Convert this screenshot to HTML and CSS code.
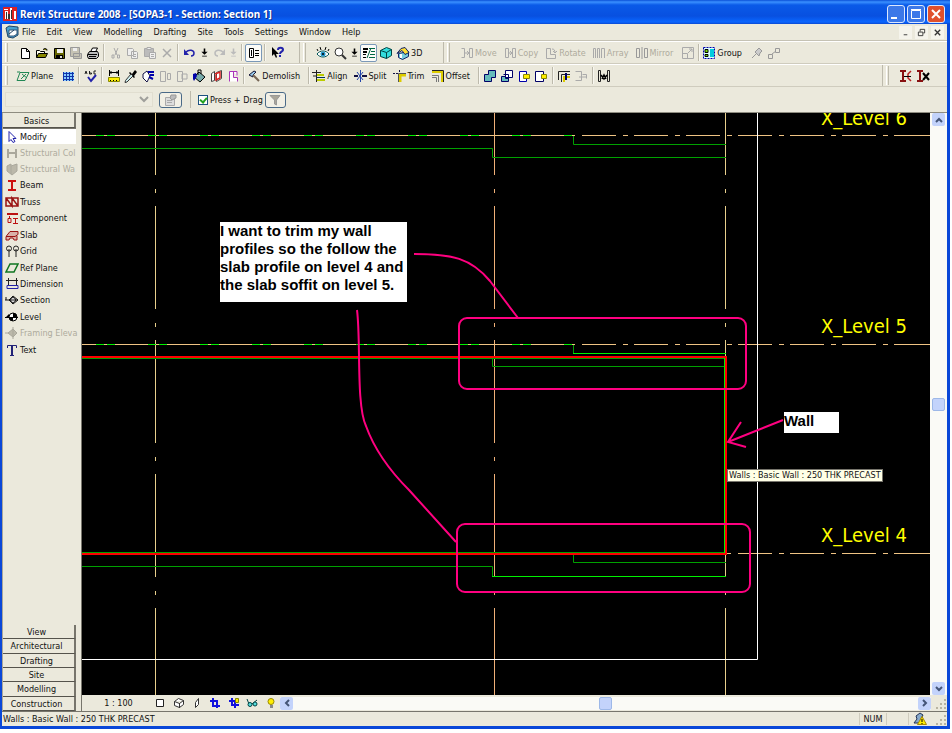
FILE: index.html
```html
<!DOCTYPE html>
<html lang="en">
  <head>
    <meta charset="utf-8" />
    <title>Revit Structure 2008 - [SOPA3-1 - Section: Section 1]</title>
    <link rel="stylesheet" href="styles.css">
  </head>

  <body>
    <div class="window">
      <header class="titlebar">
        <svg class="app-icon" viewBox="0 0 14 14"><path fill="#d22" d="M0 0h14v14H0z"/><path fill="#fff" d="M1 2h4v1H1zM2 4h3v8H2zM7 1h2v12H7zM11 4h2v8h-2z"/><path fill="#333" d="M3 5h1v7H3zM8 3h1v9H8zM5 7h2v5H5z"/></svg>
        <h1>Revit Structure 2008 - [SOPA3-1 - Section: Section 1]</h1>
        <div class="window-buttons">
          <button type="button" aria-label="Minimize"><svg viewBox="0 0 16 16"><path fill="#fff" d="M3 11h6v2H3z"/></svg></button>
          <button type="button" aria-label="Maximize"><svg viewBox="0 0 16 16"><path fill="none" stroke="#fff" d="M3.500 4.500h9v8h-9zM3 3.500h10"/></svg></button>
          <button type="button" class="close" aria-label="Close"><svg viewBox="0 0 16 16"><path stroke="#fff" stroke-width="2" d="M4 4l8 8M12 4l-8 8"/></svg></button>
        </div>
      </header>

      <nav class="menubar">
        <svg class="icon" viewBox="0 0 14 14"><path fill="#4aa3d0" stroke="#246" d="M1 3l3-2 9 1v8l-5 3-5-1z"/><path fill="#fff" stroke="#357" d="M4 5h8v4l-3 2H4z"/><path stroke="#246" d="M4 9l5-4"/></svg>
        <a href="#">File</a>
        <a href="#">Edit</a>
        <a href="#">View</a>
        <a href="#">Modelling</a>
        <a href="#">Drafting</a>
        <a href="#">Site</a>
        <a href="#">Tools</a>
        <a href="#">Settings</a>
        <a href="#">Window</a>
        <a href="#">Help</a>
        <div class="doc-buttons">
          <button type="button" aria-label="Minimize view"><svg viewBox="0 0 10 10"><path stroke="#333" d="M3 7.500h4"/></svg></button>
          <button type="button" aria-label="Restore view"><svg viewBox="0 0 10 10"><path fill="none" stroke="#333" d="M3.500 4V1.500h5v4H7M1.500 4.500h5v4h-5z"/></svg></button>
          <button type="button" aria-label="Close view"><svg viewBox="0 0 10 10"><path stroke="#333" stroke-width="1.500" d="M2 2l6 6M8 2l-6 6"/></svg></button>
        </div>
      </nav>

      <div class="toolbar-row standard-row">
        <div class="toolbar">
          <span class="grip"></span>
          <button type="button" class="tool" aria-label="New"><svg class="icon" viewBox="0 0 14 14"><path fill="#fff" stroke="#000" d="M3.500 2.500h5l3 3v7h-8zM8.500 2.500v3h3"/></svg></button>
          <button type="button" class="tool" aria-label="Open"><svg class="icon" viewBox="0 0 14 14"><path fill="#ffe" stroke="#000" d="M1.500 11.500v-7h3l1 1h4v2"/><path fill="#880" stroke="#000" d="M1.500 11.500l2-4h9l-2 4zM8 3.500l2-1 2 1v1"/></svg></button>
          <button type="button" class="tool" aria-label="Save"><svg class="icon" viewBox="0 0 14 14"><path fill="#660" stroke="#000" d="M2.500 2.500h10v10h-10z"/><path fill="#eee" d="M5 3h6v4H5z"/><path d="M4 9h7v4H4z"/><path fill="#ddd" d="M8 10h2v2H8z"/></svg></button>
          <button type="button" class="tool" disabled aria-label="Save to central"><svg class="icon" viewBox="0 0 14 14"><path fill="#c6c3b4" stroke="#999" d="M1.500 1.500h9v9h-9zM4.500 7.500h8v5h-8z"/><path fill="#eee" d="M4 2h4v3H4z"/></svg></button>
          <button type="button" class="tool" aria-label="Print"><svg class="icon" viewBox="0 0 14 14"><path fill="#fff" stroke="#000" d="M4.500 6l2-4h5l-2 4"/><path fill="#bbb" stroke="#000" d="M1.500 8.500l2-3h8l1 2v3l-2 2h-8l-1-2z"/><path stroke="#000" d="M2 8.500h9M3 10.500h7"/></svg></button>
          <span class="sep"></span>
          <button type="button" class="tool" disabled aria-label="Cut"><svg class="icon" viewBox="0 0 14 14"><path fill="none" stroke="#aaa" d="M5 2l3 7M9 2L6 9M3 9h2v3H3zM8.500 9h2v3h-2z"/></svg></button>
          <button type="button" class="tool" disabled aria-label="Copy to clipboard"><svg class="icon" viewBox="0 0 14 14"><path fill="#eee" stroke="#aaa" d="M1.500 2.500h5l1 1v6h-6zM5.500 5.500h5l1 1v6h-6zM7 8.500h3M7 10.500h3"/></svg></button>
          <button type="button" class="tool" disabled aria-label="Paste"><svg class="icon" viewBox="0 0 14 14"><path fill="#bbb" stroke="#aaa" d="M1.500 2.500h9v8h-9z"/><path fill="#eee" stroke="#aaa" d="M6.500 6.500h6v6h-6zM4 1.500h4v2H4zM8 8.500h3M8 10.500h3"/></svg></button>
          <button type="button" class="tool" disabled aria-label="Delete"><svg class="icon" viewBox="0 0 14 14"><path stroke="#aaa" stroke-width="1.500" d="M3 3l8 8M11 3l-8 8"/></svg></button>
          <span class="sep"></span>
          <button type="button" class="tool" aria-label="Undo"><svg class="icon" viewBox="0 0 14 14"><path fill="none" stroke="#22a" stroke-width="1.500" d="M3 6c3-3 8-2 8 1 0 2-1 3-3 3"/><path fill="#22a" d="M1 3v6h5z"/></svg></button>
          <button type="button" class="tool drop" aria-label="Undo list"><svg class="icon" viewBox="0 0 14 14"><path d="M6 2h2v4h3L7 10 3 6h3zM4 11h6v1H4z"/></svg></button>
          <button type="button" class="tool" disabled aria-label="Redo"><svg class="icon" viewBox="0 0 14 14"><path fill="none" stroke="#bbb" stroke-width="1.500" d="M11 6C8 3 3 4 3 7c0 2 1 3 3 3"/><path fill="#bbb" d="M13 3v6H8z"/></svg></button>
          <button type="button" class="tool drop" disabled aria-label="Redo list"><svg class="icon" viewBox="0 0 14 14"><path fill="#bbb" d="M6 2h2v4h3L7 10 3 6h3zM4 11h6v1H4z"/></svg></button>
          <span class="sep"></span>
          <button type="button" class="tool pressed" aria-label="Project browser"><svg class="icon" viewBox="0 0 14 14"><path fill="#fff" stroke="#000" d="M2.500 2.500h4v9h-4zM4.500 4v6"/><path stroke="#000" d="M8 4.500h4M8 7.500h4M8 9.500h4"/></svg></button>
          <span class="sep"></span>
          <button type="button" class="tool" aria-label="Context help"><svg class="icon" viewBox="0 0 14 14"><path d="M2 1v9l2-2 2 4 1-1-1-3h3z"/><path fill="none" stroke="#22a" stroke-width="2" d="M8 4c0-3 5-3 5 0 0 2-3 1-3 4M10 9v2"/></svg></button>
        </div>

        <div class="toolbar raised">
          <span class="grip"></span>
          <button type="button" class="tool" aria-label="Dynamic view"><svg class="icon" viewBox="0 0 14 14"><path fill="#fff" stroke="#055" d="M1 8c3-4 9-4 12 0-3 4-9 4-12 0z"/><circle cx="7" cy="8" r="2.500" fill="#29c"/><circle cx="7" cy="8" r="1"/><path stroke="#000" d="M2 5L1 3M5 4L4 1M9 4l1-3M12 5l1-2"/></svg></button>
          <button type="button" class="tool" aria-label="Zoom"><svg class="icon" viewBox="0 0 14 14"><circle cx="6" cy="6" r="4" fill="#fff" stroke="#333"/><path stroke="#333" stroke-width="2" d="M9 9l4 4"/></svg></button>
          <button type="button" class="tool drop" aria-label="Zoom list"><svg class="icon" viewBox="0 0 14 14"><path d="M6 2h2v4h3L7 10 3 6h3zM4 11h6v1H4z"/></svg></button>
          <button type="button" class="tool pressed" aria-label="Thin lines"><svg class="icon" viewBox="0 0 14 14"><path d="M1 2h5v2H1zM1 5h4v2H1zM1 8h3v1H1zM1 11h3v1H1z"/><path stroke="#064" d="M5 12l4-10M7 2.500h6M9 5.500h4M8 8.500h5M7 11.500h6"/></svg></button>
          <button type="button" class="tool" aria-label="Shaded view"><svg class="icon" viewBox="0 0 14 14"><path fill="#3dd" stroke="#044" d="M1.500 4.500l6-3 5 2v6l-5 3-6-2z"/><path fill="none" stroke="#044" d="M1.500 4.500l6 2 5-3M7.500 6.500v6"/></svg></button>
          <button type="button" class="tool" aria-label="Default 3D view"><svg class="icon" viewBox="0 0 14 14"><path fill="#7cd" stroke="#126" d="M2.500 7.500v4l4 2 6-3v-5z"/><path fill="#fd3" stroke="#126" d="M1 7.500l4-5 4-1 4 5-4 2-3-4z"/><path fill="#fff" d="M4 8h2v4H4z"/></svg></button>
          <button type="button" class="text-tool">3D</button>
        </div>

        <div class="toolbar raised edit-tools">
          <span class="grip"></span>
          <button type="button" class="text-tool" disabled><svg class="icon" viewBox="0 0 14 14"><path fill="none" stroke="#aaa" d="M1.500 2.500h3v9h-3M9.500 2.500h3v9h-3zM5 7h4M7 5l2 2-2 2"/></svg>Move</button>
          <button type="button" class="text-tool" disabled><svg class="icon" viewBox="0 0 14 14"><path fill="none" stroke="#aaa" d="M2.500 2.500h3v9h-3zM9.500 2.500h3v9h-3zM5 7h4M7 5l2 2-2 2"/></svg>Copy</button>
          <button type="button" class="text-tool" disabled><svg class="icon" viewBox="0 0 14 14"><path fill="none" stroke="#aaa" d="M2.500 12.500v-10h4v6h5v4zM8 3c2 0 3 1 3 4M9 5l2 2 2-2"/></svg>Rotate</button>
          <button type="button" class="text-tool" disabled><svg class="icon" viewBox="0 0 14 14"><path fill="none" stroke="#aaa" d="M1.500 12V2.500h2V12M5.500 12V2.500h2V12M9.500 12V2.500h3V12"/></svg>Array</button>
          <button type="button" class="text-tool" disabled><svg class="icon" viewBox="0 0 14 14"><path fill="none" stroke="#999" d="M1.500 2.500h3v9h-3zM9.500 2.500h3v9h-3zM7 1v12"/></svg>Mirror</button>
          <button type="button" class="tool" disabled aria-label="Resize"><svg class="icon" viewBox="0 0 14 14"><path fill="none" stroke="#aaa" d="M1.500 1.500h11v11h-11zM1.500 7.500h5v5M7 7l4-4M8 3h3v3"/></svg></button>
          <span class="sep"></span>
          <button type="button" class="text-tool"><svg class="icon" viewBox="0 0 14 14"><path fill="#dff" stroke="#00a" stroke-dasharray="2 1" d="M1.500 1.500h11v11h-11z"/><path fill="#7d0" stroke="#000" d="M3 3.500h3v3H3zM3 8.500h3v2H3z"/><path fill="#0cd" d="M8 3h4v8H8z"/></svg>Group</button>
          <button type="button" class="tool" disabled aria-label="Pin"><svg class="icon" viewBox="0 0 14 14"><path fill="#ccc" stroke="#999" d="M2 12l4-4M5 6l4 4 1-3 2-2-3-3-2 2z"/></svg></button>
          <button type="button" class="tool" disabled aria-label="Unpin"><svg class="icon" viewBox="0 0 14 14"><path fill="none" stroke="#999" d="M1.500 8.500h4v4h-4zM8.500 2.500h4v4h-4zM5 8l4-3"/></svg></button>
        </div>
      </div>

      <div class="toolbar-row">
        <div class="toolbar tools">
          <span class="grip"></span>
          <button type="button" class="text-tool"><svg class="icon" viewBox="0 0 14 14"><path fill="none" stroke="#285" d="M4 3.500h9l-4 8H1zM6 5l5 4M10 5l-5 5M1 3h3"/></svg>Plane</button>
          <button type="button" class="tool" aria-label="Work plane visibility"><svg class="icon" viewBox="0 0 14 14"><path fill="#8cf" d="M2 3h11v9H2z"/><path stroke="#13a" d="M2.500 3v9M5.500 3v9M8.500 3v9M11.500 3v9M2 4.500h11M2 7.500h11M2 10.500h11"/></svg></button>
          <span class="sep"></span>
          <button type="button" class="tool" aria-label="Spelling"><svg class="icon" viewBox="0 0 14 14"><path fill="none" stroke="#222" d="M1 5l1-3 1 3M5.500 2v3h2V4h-2M12 2h-2v3h2"/><path fill="none" stroke="#22a" stroke-width="2" d="M4 8l3 4 5-6"/></svg></button>
          <span class="sep"></span>
          <button type="button" class="tool" aria-label="Tape measure"><svg class="icon" viewBox="0 0 14 14"><path fill="none" stroke="#000" d="M2.500 1v6M11.500 1v6M2 3.500h10M4 2v3M10 2v3"/><path fill="#fe0" stroke="#880" d="M1.500 8.500h11v4h-11z"/><path stroke="#000" d="M3.500 11v1M6.500 11v1M9.500 11v1"/></svg></button>
          <button type="button" class="tool" aria-label="Match type"><svg class="icon" viewBox="0 0 14 14"><path d="M8 5l3-4 2 2-3 4zM6 3l5 5-1 1-5-5z"/><path fill="#cee" stroke="#333" d="M7 5l2 2-6 6-2 .500.500-2z"/></svg></button>
          <button type="button" class="tool" aria-label="Linework"><svg class="icon" viewBox="0 0 14 14"><path fill="#fff" stroke="#114" d="M2 5l4-3 3 5-3 6-4-4z"/><path stroke="#00a" stroke-width="2" d="M7 3h6M9 6h4M8 8l4 2"/></svg></button>
          <button type="button" class="tool" disabled aria-label="Show hidden lines"><svg class="icon" viewBox="0 0 14 14"><path fill="none" stroke="#aaa" d="M2.500 2.500h5v10h-5zM9.500 4.500h3v6h-3z"/></svg></button>
          <button type="button" class="tool" disabled aria-label="Remove hidden lines"><svg class="icon" viewBox="0 0 14 14"><path fill="none" stroke="#aaa" d="M2.500 2.500h5v10h-5zM7 5h5v5H7z"/></svg></button>
          <button type="button" class="tool" aria-label="Paint"><svg class="icon" viewBox="0 0 14 14"><path fill="#7aa" stroke="#000" d="M2 8l5-5 6 5-5 5z"/><path fill="#00a" d="M1 5l3-1 1 3-3 5-1-2z"/><path fill="none" stroke="#000" d="M6 6V1h3v4"/></svg></button>
          <button type="button" class="tool" aria-label="Split face"><svg class="icon" viewBox="0 0 14 14"><path fill="#fff" stroke="#444" d="M2.500 4.500l3-2v9l-3 1zM7.500 3.500l5-2v8l-5 3z"/><path fill="none" stroke="#d22" stroke-width="1.500" d="M6 5l5-2v6l-4 2V6"/></svg></button>
          <button type="button" class="tool" aria-label="Demolish phase"><svg class="icon" viewBox="0 0 14 14"><path fill="#fff" stroke="#a3b" d="M3.500 12.500v-10h4v6h4v4M7 2.500h4v4"/></svg></button>
          <span class="sep"></span>
          <button type="button" class="text-tool"><svg class="icon" viewBox="0 0 14 14"><path fill="#9ce" stroke="#113" d="M2 6l5-4 2 1-3 3v2z"/><path stroke="#765" stroke-width="2" d="M6 6l6 6"/></svg>Demolish</button>
          <span class="sep"></span>
          <button type="button" class="text-tool"><svg class="icon" viewBox="0 0 14 14"><path stroke="#222" d="M0 3.500h9M4.500 1v12M1 7h3"/><path stroke="#bc0" stroke-width="2" d="M5 6h7M5 11h8"/><path stroke="#035" d="M5 8.500h8"/></svg>Align</button>
          <button type="button" class="text-tool"><svg class="icon" viewBox="0 0 14 14"><path stroke="#114" stroke-width="2" d="M1 7h4M9 7h5"/><path stroke="#24a" d="M4 3l6 8M10 3l-6 8M7.500 1v12"/></svg>Split</button>
          <button type="button" class="text-tool"><svg class="icon" viewBox="0 0 14 14"><path fill="none" stroke="#114" stroke-dasharray="2 1" d="M1 4.500h5M7.500 1v4"/><path fill="none" stroke="#dc0" stroke-width="3" d="M8 13V6h6"/><path fill="none" stroke="#555" d="M6.500 13V4.500H14"/></svg>Trim</button>
          <button type="button" class="text-tool"><svg class="icon" viewBox="0 0 14 14"><path fill="none" stroke="#222" d="M1 1.500h11.500V13"/><path fill="none" stroke="#dc0" stroke-width="2" d="M1 3h10v10"/><path fill="none" stroke="#777" d="M1 6.500h6.500V13M1 8.500h4.500V13"/></svg>Offset</button>
          <span class="sep"></span>
          <button type="button" class="tool" aria-label="Join geometry"><svg class="icon" viewBox="0 0 14 14"><path fill="#6bb" stroke="#006" d="M5.500 1.500h7v7h-4v4h-7v-7h4z"/></svg></button>
          <button type="button" class="tool" aria-label="Unjoin geometry"><svg class="icon" viewBox="0 0 14 14"><path fill="#fff" stroke="#006" d="M5.500 1.500h7v7h-7z"/><path fill="#6bb" stroke="#006" d="M1.500 7.500h4v2h3v3h-7z"/><path fill="none" stroke="#006" d="M3.500 5.500h5v5"/></svg></button>
          <button type="button" class="tool" aria-label="Cut geometry"><svg class="icon" viewBox="0 0 14 14"><path fill="#fff" stroke="#00a" d="M2.500 2.500h7v10h-7z"/><path fill="#fe0" stroke="#880" d="M6.500 5.500h6v4h-6z"/></svg></button>
          <button type="button" class="tool" aria-label="Uncut geometry"><svg class="icon" viewBox="0 0 14 14"><path fill="#fff" stroke="#006" d="M1.500 2.500h8v10h-8z"/><path fill="#fe0" stroke="#880" d="M7.500 5.500h5v4h-5z"/></svg></button>
          <span class="sep"></span>
          <button type="button" class="tool" aria-label="Wall joins"><svg class="icon" viewBox="0 0 14 14"><path fill="none" stroke="#222" d="M1.500 11V2.500H13M4.500 13V5.500H13"/><path fill="none" stroke="#dc0" stroke-width="2" d="M7 13V8h6"/><path stroke="#006" stroke-width="2" d="M9 4v7"/></svg></button>
          <button type="button" class="tool" disabled aria-label="Edit joins"><svg class="icon" viewBox="0 0 14 14"><path fill="none" stroke="#aaa" d="M1.500 2.500h6v9h-6M8.500 5.500h4v4M5 8h7"/></svg></button>
          <span class="sep"></span>
          <button type="button" class="tool" aria-label="Beam joins"><svg class="icon" viewBox="0 0 14 14"><path fill="none" stroke="#222" d="M1.500 1.500h2v11h-2zM10.500 1.500h2v11h-2z"/><path fill="none" stroke="#000" stroke-width="1.500" d="M4 6l3 4 3-4M5 10l2-4 2 4"/></svg></button>
        </div>
        <div class="toolbar raised beam-tools">
          <span class="grip"></span>
          <button type="button" class="tool" aria-label="Attach"><svg class="icon" viewBox="0 0 14 14"><path fill="none" stroke="#811" stroke-width="2" d="M1 2h6M4 2v10M1 12h6"/><path fill="none" stroke="#b22" stroke-width="1.500" d="M12 2L9 5v4l3 3"/><path stroke="#000" d="M5 7.500h7"/></svg></button>
          <button type="button" class="tool" aria-label="Detach"><svg class="icon" viewBox="0 0 14 14"><path fill="none" stroke="#811" stroke-width="2" d="M1 2h6M4 2v10M1 12h6"/><path stroke="#000" stroke-width="2" d="M7 4l6 7M13 4l-6 7"/></svg></button>
        </div>
      </div>

      <div class="options-bar">
        <select class="type-selector" disabled aria-label="Type selector"></select>
        <button type="button" class="option-button" disabled aria-label="Element properties"><svg class="icon" viewBox="0 0 14 14"><path fill="#ddd" stroke="#aaa" d="M1.500 4.500h9v8h-9zM3 7.500h5M3 9.500h5"/><path fill="#bbb" stroke="#999" d="M7 2h5v3l-4 2-2-2z"/></svg></button>
        <span class="divider"></span>
        <input type="checkbox" id="press-drag" checked />
        <label for="press-drag">Press + Drag</label>
        <button type="button" class="option-button filter" disabled aria-label="Filter selection"><svg class="icon" viewBox="0 0 14 14"><path fill="#aaa69a" stroke="#999" d="M2 2.500h10L8.500 7v5l-2-1V7z"/></svg></button>
      </div>

      <main class="workspace">
        <aside class="design-bar">
          <button type="button" class="tab">Basics</button>
          <ul class="design-tools">
            <li class="selected"><button type="button"><svg class="icon" viewBox="0 0 14 14"><path fill="#fff" stroke="#22a" d="M4 1.500v10l2-2 2 3 2-1-2-3h3z"/></svg>Modify</button></li>
            <li><button type="button" disabled><svg class="icon" viewBox="0 0 14 14"><path fill="none" stroke="#aaa89c" stroke-width="2" d="M3 3v9M11 3v9M3 7h8"/></svg>Structural Col</button></li>
            <li><button type="button" disabled><svg class="icon" viewBox="0 0 14 14"><path fill="#bbb8aa" stroke="#aaa89c" d="M2 4l4-2v2l6-2v7l-5 4-5-4zM6 4v8"/></svg>Structural Wa</button></li>
            <li><button type="button"><svg class="icon" viewBox="0 0 14 14"><path fill="none" stroke="#c11" stroke-width="2" d="M3 3h8M7 3v9M3 12h8"/></svg>Beam</button></li>
            <li><button type="button"><svg class="icon" viewBox="0 0 14 14"><path fill="none" stroke="#911" stroke-width="1.500" d="M1 3h12v8H1zM1 3l6 8V3l6 8"/></svg>Truss</button></li>
            <li><button type="button"><svg class="icon" viewBox="0 0 14 14"><path fill="none" stroke="#b11" stroke-width="2" d="M2 3h11"/><path fill="none" stroke="#b11" d="M3 7.500h3v4H3zM4.500 5v3M8 7.500h5M10.500 7v5M8 12.500h5"/></svg>Component</button></li>
            <li><button type="button"><svg class="icon" viewBox="0 0 14 14"><path fill="#d9b0a8" stroke="#911" d="M1 8.500l4-5h8v3l-3 2zM1 9v3h3l1-2h3l1 2h3V8"/></svg>Slab</button></li>
            <li><button type="button"><svg class="icon" viewBox="0 0 14 14"><g fill="none" stroke="#222"><circle cx="4" cy="4.500" r="2.500"/><circle cx="11" cy="4.500" r="2.500"/><path d="M4 5v8M11 5v8"/></g></svg>Grid</button></li>
            <li><button type="button"><svg class="icon" viewBox="0 0 14 14"><path fill="none" stroke="#172" stroke-width="1.500" d="M5 3h8l-4 8H1z"/></svg>Ref Plane</button></li>
            <li><button type="button"><svg class="icon" viewBox="0 0 14 14"><path fill="none" stroke="#222" d="M1 3.500h12M3.500 1v4M11.500 1v4M3.500 4v5M11.500 4v5"/><path fill="none" stroke="#22a" d="M2 8.500h11v3H2z"/></svg>Dimension</button></li>
            <li><button type="button"><svg class="icon" viewBox="0 0 14 14"><path fill="none" stroke="#111" d="M4 7l4-4 5 4-5 4zM0 7h13M1 4v3"/><circle cx="8" cy="7" r="2.500" fill="#fff" stroke="#111"/><path stroke="#111" d="M6 7h5"/></svg>Section</button></li>
            <li><button type="button"><svg class="icon" viewBox="0 0 14 14"><circle cx="8" cy="7" r="4" fill="#fff" stroke="#000"/><path d="M8 3v4h4a4 4 0 0 0-4-4zM8 11V7H4a4 4 0 0 0 4 4zM4 4v3H1z"/><path stroke="#000" d="M0 7.500h13"/></svg>Level</button></li>
            <li><button type="button" disabled><svg class="icon" viewBox="0 0 14 14"><path fill="#bbb8aa" stroke="#aaa89c" d="M3 7l5-4 4 4-4 4zM0 7h3M8 1v12"/></svg>Framing Eleva</button></li>
            <li><button type="button"><svg class="icon" viewBox="0 0 14 14"><path fill="none" stroke="#227" d="M2.500 5V2.500h9V5M5 12.500h4"/><path stroke="#227" stroke-width="2" d="M7 2v10"/></svg>Text</button></li>
          </ul>
          <div class="tab-stack">
            <button type="button" class="tab">View</button>
            <button type="button" class="tab">Architectural</button>
            <button type="button" class="tab">Drafting</button>
            <button type="button" class="tab">Site</button>
            <button type="button" class="tab">Modelling</button>
            <button type="button" class="tab">Construction</button>
          </div>
        </aside>

        <section class="view">
          <div class="view-body">
            <div class="canvas">
              <svg class="drawing" viewBox="82 113 848 582" width="848" height="582">
                <!-- grids -->
                <g fill="none" stroke-dasharray="103 14 4 13">
                  <path class="grid-line" d="M155.500 72v623"/>
                  <path class="grid-line centre" d="M494.500 72v623"/>
                  <path class="grid-line" d="M725.500 72v623"/>
                </g>
                <!-- levels -->
                <g class="level-line">
                  <path d="M82 135.500h493M82 344.500h493M894 135.500h36M894 344.500h36M894 553.500h36"/>
                  <path stroke-dasharray="34 7 5 6" d="M582 135.500h312M582 344.500h312M738 553.500h156M727 553.500h4"/>
                </g>
                <path class="level-mark" stroke-dasharray="8 3 8 33" d="M96 135.500h478M96 344.500h478"/>
                <!-- section box -->
                <path class="crop-line" d="M757.500 113v546.500H82"/>
                <!-- slabs -->
                <g class="slab">
                  <path d="M82 148.500h410.500v9H726M573.500 136v8.500H726"/>
                  <path d="M82 358.500h643M492.500 358v8.500H726M573.500 345v8.500"/>
                  <path d="M82 552.500h643M82 566.500h410.500v10M573.500 555v7.500H726"/>
                </g>
                <path class="slab bright" d="M573 353.500h153M492 576.500h234M724.500 358v195"/>
                <!-- picked wall -->
                <path class="wall" d="M82 357h644v197H82"/>
                <!-- markup -->
                <g class="markup">
                  <rect x="459" y="318" width="287" height="71" rx="8"/>
                  <rect x="457" y="524" width="293" height="68" rx="8"/>
                  <path d="M414 254c38 0 57 4 76 27l28 37"/>
                  <path d="M357 310c4 30-1 95 9 116 9 25 25 46 43 64l47 52"/>
                  <path d="M783 420l-55 22M741 422l-13 20 18 5"/>
                </g>
                <g class="level-name">
                  <text x="821" y="125">X_Level 6</text>
                  <text x="821" y="333">X_Level 5</text>
                  <text x="821" y="542">X_Level 4</text>
                </g>
              </svg>
              <p class="note trim-note">I want to trim my wall<br>profiles so the follow the<br>slab profile on level 4 and<br>the slab soffit on level 5.</p>
              <p class="note wall-note">Wall</p>
              <div class="tooltip">Walls : Basic Wall : 250 THK PRECAST</div>
            </div>
            <div class="scrollbar vertical">
              <button type="button" aria-label="Scroll up"><svg viewBox="0 0 12 12"><path fill="none" stroke="#457" stroke-width="2" d="M3 8l3-3 3 3"/></svg></button>
              <span class="track"><span class="thumb"></span></span>
              <button type="button" aria-label="Scroll down"><svg viewBox="0 0 12 12"><path fill="none" stroke="#457" stroke-width="2" d="M3 4l3 3 3-3"/></svg></button>
            </div>
          </div>
          <div class="view-controls">
            <button type="button" class="scale">1 : 100</button>
            <div class="view-buttons">
              <button type="button" aria-label="Detail level"><svg viewBox="0 0 12 12"><path fill="#fff" stroke="#222" d="M2.500 2.500h7v7h-7z"/></svg></button>
              <button type="button" aria-label="Model graphics"><svg viewBox="0 0 12 12"><path fill="#fff" stroke="#333" d="M1.500 4.500l4-3 5 2v4l-4 3-5-2zM1.500 4.500l5 2 4-3M6.500 6v5"/></svg></button>
              <button type="button" aria-label="Shadows"><svg viewBox="0 0 12 12"><path fill="#fff" stroke="#333" d="M4.500 10.500v-5l3-4v6z"/></svg></button>
              <button type="button" aria-label="Crop view"><svg viewBox="0 0 12 12"><path fill="none" stroke="#11d" stroke-width="2" d="M4 1v8h7M1 4h7v7"/></svg></button>
              <button type="button" aria-label="Show crop region"><svg viewBox="0 0 12 12"><path fill="none" stroke="#11d" stroke-width="2" d="M4 1v7h7M1 4h6v7"/><path fill="#fe0" stroke="#880" d="M7.500 1.500h3v4h-3z"/></svg></button>
              <button type="button" aria-label="Temporary hide"><svg viewBox="0 0 12 12"><g fill="#5dd" stroke="#044"><path fill="none" d="M1 2l2 5M6 7l5-4"/><circle cx="4" cy="7.500" r="2"/><circle cx="9" cy="7" r="2"/></g></svg></button>
              <button type="button" aria-label="Reveal hidden elements"><svg viewBox="0 0 12 12"><circle cx="6" cy="4.500" r="3" fill="#fe0" stroke="#980"/><path fill="#888" d="M5 8h3v3H5z"/></svg></button>
            </div>
            <div class="scrollbar horizontal">
              <button type="button" aria-label="Scroll left"><svg viewBox="0 0 12 12"><path fill="none" stroke="#457" stroke-width="2" d="M8 3L5 6l3 3"/></svg></button>
              <span class="track"><span class="thumb"></span></span>
              <button type="button" aria-label="Scroll right"><svg viewBox="0 0 12 12"><path fill="none" stroke="#457" stroke-width="2" d="M4 3l3 3-3 3"/></svg></button>
            </div>
            <svg class="size-grip" viewBox="0 0 16 14"><path stroke="#b8b4a2" stroke-width="2" stroke-dasharray="2 2" d="M5 12h10M9 8h6M13 4h2"/></svg>
          </div>
        </section>
      </main>

      <footer class="status-bar">
        <span class="status-text">Walls : Basic Wall : 250 THK PRECAST</span>
        <span class="cell"></span>
        <span class="cell num">NUM</span>
        <span class="cell"></span>
        <svg class="icon" viewBox="0 0 14 14"><path fill="#8ac" stroke="#235" d="M1 11l3-4-1-3 4-3 3 2-2 4v4z"/><path fill="#fe0" stroke="#a80" d="M9 4.500l4.500 8h-9z"/><path stroke="#000" d="M9 7v3M9 11v1"/></svg>
        <svg class="size-grip" viewBox="0 0 16 14"><path stroke="#b8b4a2" stroke-width="2" stroke-dasharray="2 2" d="M5 12h10M9 8h6M13 4h2"/></svg>
      </footer>
    </div>
  </body>
</html>
```

FILE: styles.css
```css
* {
  box-sizing: border-box;
}

body {
  margin: 0;
  padding: 0 2px 4px 0;
  height: 100vh;
  background: #fff;
  color: #111;
  font: 9px/12px "DejaVu Sans Condensed", "DejaVu Sans", sans-serif;
}

button {
  display: flex;
  align-items: center;
  justify-content: center;
  margin: 0;
  padding: 0;
  border: 0;
  background: none;
  color: inherit;
  font: inherit;
  white-space: nowrap;
}

button:disabled {
  color: #aeab9d;
}

.icon {
  display: block;
  flex: none;
  width: 14px;
  height: 14px;
}

.window {
  display: flex;
  flex-direction: column;
  height: 100%;
  border: solid #0a47d8;
  border-width: 0 3px 3px 2px;
  background: #ebe9dc;
}

/* title bar */

.titlebar {
  display: flex;
  align-items: center;
  flex: none;
  height: 24px;
  margin: 0 -3px 0 -2px;
  padding: 3px 5px 0 3px;
  gap: 3px;
  background: linear-gradient(#0a50d8, #3a90ff 2px, #0a5ae8 5px, #0850e0 16px, #0a66ff 22px, #0a48d0);
}

.app-icon {
  width: 14px;
  height: 14px;
}

h1 {
  flex: 1;
  margin: 0;
  color: #fff;
  font: bold 10px/14px "Noto Sans", sans-serif;
  text-shadow: 1px 1px #0a2a88;
}

.window-buttons {
  display: flex;
  gap: 2px;
}

.window-buttons button {
  width: 18px;
  height: 18px;
  border: 1px solid #dce8ff;
  border-radius: 3px;
  background: #3c78e8;
}

.window-buttons svg {
  width: 16px;
  height: 16px;
}

.window-buttons .close {
  background: #e0502c;
}

/* menu */

.menubar {
  display: flex;
  align-items: center;
  flex: none;
  gap: 11px;
  height: 17px;
  padding: 0 3px;
  border-bottom: 1px solid #c5c2b4;
}

.menubar .icon {
  margin-right: -8px;
}

.menubar a {
  color: inherit;
  text-decoration: none;
}

.doc-buttons {
  display: flex;
  gap: 3px;
  margin-left: auto;
}

.doc-buttons button {
  width: 13px;
  height: 13px;
  background: #f5f4ec;
}

.doc-buttons svg {
  width: 9px;
  height: 9px;
}

/* toolbars */

.toolbar-row {
  display: flex;
  flex: none;
  height: 23px;
  border-top: 1px solid #fff;
  border-bottom: 1px solid #cfccbe;
}

.standard-row {
  display: grid;
  grid-template-columns: 297px 144px 1fr;
}

.toolbar {
  display: flex;
  align-items: center;
  padding-left: 3px;
}

.toolbar.raised {
  border-left: 1px solid #bdbaac;
}

.grip {
  width: 3px;
  height: 19px;
  margin-right: 8px;
  border-left: 1px solid #fff;
  border-right: 1px solid #bdbaac;
}

.sep {
  width: 2px;
  height: 17px;
  margin: 0 2px;
  border-left: 1px solid #bdbaac;
  border-right: 1px solid #f8f7f0;
}

.tool {
  width: 17px;
  height: 18px;
}

.tool.drop {
  width: 12px;
}

.tool.drop .icon {
  width: 11px;
  height: 11px;
}

.tool.pressed {
  border: 1px solid #7a98b8;
  border-radius: 2px;
  background: #fbfbf8;
}

.text-tool {
  height: 18px;
  gap: 1px;
}

.edit-tools .text-tool {
  margin-right: 6px;
}

.edit-tools .grip {
  margin-right: 10px;
}

.tools .text-tool {
  margin-right: 6px;
}

.beam-tools {
  margin-left: auto;
  padding-right: 16px;
}

/* options bar */

.options-bar {
  display: flex;
  align-items: center;
  flex: none;
  height: 26px;
  padding-left: 3px;
  border-bottom: 1px solid #8e8c80;
}

.type-selector {
  width: 148px;
  height: 15px;
  border: 1px solid #dddacb;
  background: #eeece1;
}

.option-button {
  width: 23px;
  height: 16px;
  margin-left: 6px;
  border: 1px solid #4a6a88;
  border-radius: 3px;
  background: #f2f0e6;
}

.option-button.filter {
  width: 21px;
  margin-left: 2px;
}

.divider {
  width: 1px;
  height: 17px;
  margin: 0 7px 0 8px;
  background: #bdbaac;
}

#press-drag {
  appearance: none;
  width: 10px;
  height: 10px;
  margin: 0 2px 0 0;
  border: 1px solid #1c5180;
  background: #fff;
}

#press-drag:checked::before {
  content: "";
  display: block;
  width: 3px;
  height: 5px;
  margin: 0 0 0 2px;
  border: solid #21a121;
  border-width: 0 2px 2px 0;
  transform: rotate(40deg);
}

/* workspace */

.workspace {
  display: flex;
  flex: 1;
  min-height: 0;
}

.design-bar {
  display: flex;
  flex-direction: column;
  flex: none;
  width: 74px;
  margin-right: 5px;
  border-left: 1px solid #aaa79a;
}

.tab {
  width: 100%;
  min-height: 14px;
  padding: 1px 4px 0 0;
  border: solid #55534c;
  border-width: 0 2px 1px 0;
  border-right-color: #77756c;
}

.design-bar > .tab {
  height: 15px;
}

.design-tools {
  display: grid;
  grid-auto-rows: 1fr;
  height: 230px;
  margin: 0 0 auto;
  padding: 0;
  list-style: none;
}

.design-tools li {
  min-width: 0;
}

.design-tools button {
  justify-content: flex-start;
  gap: 1px;
  height: 100%;
  padding-left: 2px;
}

.design-tools .selected {
  border-top: 1px solid #77756c;
  background: #fff;
}

.tab-stack {
  display: grid;
  grid-auto-rows: 1fr;
  height: 86px;
}

.view {
  display: flex;
  flex-direction: column;
  flex: 1;
  min-width: 0;
  border-left: 1px solid #77756c;
}

.view-body {
  display: flex;
  flex: 1;
  min-height: 0;
}

.canvas {
  position: relative;
  flex: 1;
  overflow: hidden;
  background: #000;
}

.drawing {
  display: block;
}

.grid-line {
  stroke: #e8cf8c;
}

.grid-line.centre {
  stroke: #f0b078;
}

.level-line {
  fill: none;
  stroke: #f0c484;
}

.level-mark {
  stroke: #00f000;
}

.crop-line {
  fill: none;
  stroke: #fff;
}

.slab {
  fill: none;
  stroke: #00a000;
}

.slab.bright {
  stroke: #00f000;
}

.wall {
  fill: none;
  stroke: #f00;
  stroke-width: 2;
}

.markup {
  fill: none;
  stroke: #ff0080;
  stroke-width: 2;
}

.level-name {
  fill: #ff0;
  font: 20px "DejaVu Sans Condensed", "DejaVu Sans", sans-serif;
}

.note {
  position: absolute;
  margin: 0;
  background: #fff;
  color: #000;
  font: bold 15px/18px "Liberation Sans", Arial, sans-serif;
  white-space: nowrap;
}

.trim-note {
  left: 138px;
  top: 109px;
  width: 187px;
  height: 80px;
}

.wall-note {
  left: 702px;
  top: 299px;
  width: 55px;
  height: 21px;
}

.tooltip {
  position: absolute;
  left: 645px;
  top: 356px;
  padding: 0 1px;
  border: 1px solid #77756c;
  background: #ffffe6;
  line-height: 11px;
  white-space: nowrap;
}

.scrollbar {
  display: flex;
  background: #fafaf6;
}

.scrollbar.vertical {
  flex-direction: column;
  width: 17px;
  padding: 0 2px 0 2px;
}

.scrollbar.horizontal {
  flex: 1;
}

.scrollbar button,
.thumb {
  flex: none;
  width: 13px;
  height: 13px;
  border-radius: 2px;
  background: #c3d3fb;
}

.scrollbar svg {
  width: 12px;
  height: 12px;
}

.track {
  display: flex;
  flex: 1;
  align-items: center;
  justify-content: center;
}

.vertical .track {
  flex-direction: column;
}

.thumb {
  border: 1px solid #9db8e8;
}

.view-controls {
  display: flex;
  align-items: center;
  flex: none;
  height: 16px;
}

.scale {
  width: 69px;
  padding-left: 4px;
}

.view-buttons {
  display: grid;
  grid-template-columns: repeat(7, 1fr);
  width: 129px;
}

.view-buttons svg {
  width: 12px;
  height: 12px;
}

.size-grip {
  width: 16px;
  height: 14px;
}

/* status bar */

.status-bar {
  display: flex;
  align-items: center;
  flex: none;
  height: 15px;
  border-top: 1px solid #77756c;
}

.status-text {
  flex: 1;
  padding-left: 1px;
}

.cell {
  width: 22px;
  height: 12px;
  border-right: 1px solid #cfccbe;
}

.cell.num {
  width: 27px;
  text-align: center;
}

.status-bar .icon {
  margin: 0 4px;
}
```
